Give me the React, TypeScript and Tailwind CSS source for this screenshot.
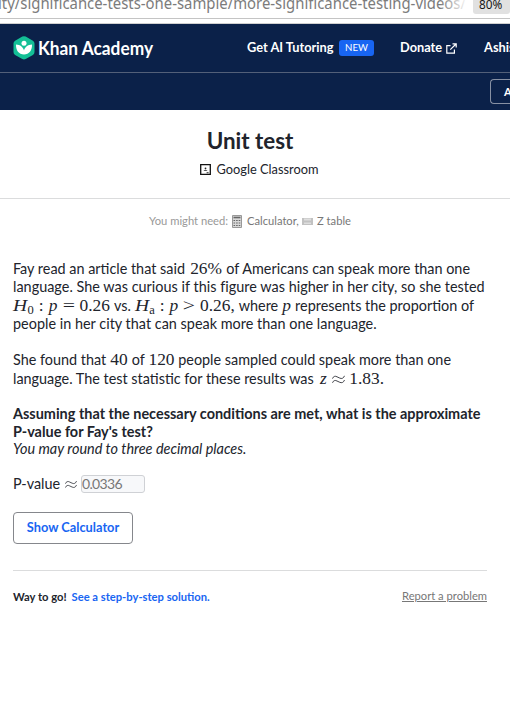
import type { ReactNode } from "react";

function M({ w, italic, children }: { w: string; italic?: boolean; children: ReactNode }) {
  return (
    <span
      className={`inline-block whitespace-nowrap text-center font-['Liberation_Serif',serif] text-[17.4px] leading-[16px] ${w} ${italic ? "italic" : ""}`}
    >
      {children}
    </span>
  );
}

function Approx() {
  return (
    <svg width="13" height="9" viewBox="0 0 13 9" fill="none" stroke="#21242c" strokeWidth="0.85" className="inline-block align-[0px]">
      <path d="M.5 3.6C1.2 1.3 3.3.7 5 1.8l2.8 1.3c1.8.9 3.8.3 4.7-2.3M.5 7.8C1.2 5.5 3.3 4.9 5 6l2.8 1.3c1.8.9 3.8.3 4.7-2.3" />
    </svg>
  );
}

function Hypothesis({ sub, op, value, w }: { sub: string; op: string; value: string; w: string }) {
  return (
    <M w={w}>
      <span className="flex items-baseline justify-between">
        <span>
          <i className="inline-block w-[14.5px] origin-left scale-x-112 text-left">H</i>
          <span className="inline-block align-[-3px] text-[12.5px] leading-[8px]">{sub}</span>
        </span>
        <span>:</span>
        <i>p</i>
        <span className="inline-block scale-x-125 px-px">{op}</span>
        <span>{value}</span>
      </span>
    </M>
  );
}

function Line({ h, w, children }: { h: string; w: string; children: ReactNode }) {
  return <div className={`flex items-baseline justify-between whitespace-pre ${h} ${w}`}>{children}</div>;
}

function Logo() {
  return (
    <svg width="22" height="24" viewBox="0 0 22 24" className="shrink-0">
      <path d="M9.3.6Q11-.3 12.7.6l7.2 4.1q1.6.9 1.6 2.8v8.6q0 1.9-1.6 2.8l-7.2 4.2q-1.7.9-3.4 0l-7.2-4.2Q.5 18 .5 16.100V7.500q0-1.900 1.600-2.800z" fill="#14bf96" />
      <circle cx="11" cy="7.300" r="2.500" fill="#fff" />
      <path d="M3 8.500c4.200.1 7.200 2.700 8 6 .8-3.300 3.800-5.900 8-6 .2 6-2.800 9.900-8 9.900S2.800 14.500 3 8.500z" fill="#fff" />
    </svg>
  );
}

export default function App() {
  return (
    <div className="h-[722px] w-[510px] overflow-hidden bg-white font-['Lato',sans-serif] text-[14.4px] text-[#21242c]">
      <div className="flex h-[24px] justify-between overflow-hidden border-b border-[#d0d0d0] bg-white">
        <div className="flex h-[19px] w-full justify-between border-b border-[#c4c4c4]">
          <div className="relative h-[18px] w-[468px] shrink-0 overflow-hidden whitespace-nowrap font-['Noto_Sans',sans-serif] text-[15.5px] text-[#7c7c7c]">
            <svg width="468" height="18" className="block">
              <text x="-2" y="9" textLength="468" lengthAdjust="spacingAndGlyphs" fill="currentColor">ity/significance-tests-one-sample/more-significance-testing-videos/</text>
            </svg>
            <div className="absolute inset-y-0 right-0 w-[28px] bg-linear-to-r from-transparent to-white" />
          </div>
          <div className="h-[14px] w-[37px] shrink-0 rounded-b-[3px] bg-[#e1e1e1] pl-[6px] font-['Noto_Sans',sans-serif] text-[11.8px] leading-[8px] text-[#171717]">80%</div>
        </div>
      </div>

      <header className="h-[86px] bg-[#0b2149] text-white">
        <div className="flex h-[49px] items-center border-b border-[#536079] pl-[13px]">
          <Logo />
          <svg width="118" height="28" className="ml-[3px] block shrink-0">
            <text x="0" y="21" textLength="115" lengthAdjust="spacingAndGlyphs" fill="white" className="font-['Lato',sans-serif] text-[18.5px] font-bold">Khan Academy</text>
          </svg>
          <div className="ml-[91px] w-[88px] shrink-0 whitespace-nowrap text-[12.8px] font-bold">Get AI Tutoring</div>
          <div className="ml-[4px] flex h-[16px] w-[35px] shrink-0 items-center justify-center rounded-[3px] bg-[#1865f2] text-[9.6px]">NEW</div>
          <div className="ml-[26px] w-[42px] shrink-0 text-[12.8px] font-bold">Donate</div>
          <svg width="11" height="11" viewBox="0 0 11 11" fill="none" stroke="white" strokeWidth="1.200" className="ml-[4px] mt-px shrink-0">
            <path d="M4.500 2.600H.8v7.600h7.600V6.500M6.500.8h3.700v3.700M10 1 4.300 6.700" />
          </svg>
          <div className="ml-[27px] shrink-0 whitespace-nowrap text-[12.8px] font-bold">Ashis</div>
        </div>
        <div className="flex justify-end overflow-hidden pt-[6px]">
          <div className="h-[25px] w-[20px] rounded-l-[4px] border border-r-0 border-[#8790a3] pl-[13px] text-[11px] leading-[23px] font-bold">A</div>
        </div>
      </header>

      <section className="flex h-[89px] flex-col items-center border-b border-[#dbdcdd] pr-[10px] pt-[17px]">
        <h1 className="text-[22.4px] leading-[28px] font-bold">Unit test</h1>
        <div className="ml-[18px] mt-[6px] flex h-[18px] items-center text-[12.8px]">
          <svg width="11" height="11" viewBox="0 0 11 11" fill="none" className="mb-px mr-[6px]">
            <path d="M.7.700h9.600v9.600H.7z" stroke="#111" strokeWidth="1.300" />
            <circle cx="5.500" cy="4.300" r=".9" fill="#222" />
            <path d="M3.400 6.700q2.100-2 4.200 0zM6.600 8.300h2v1h-2z" fill="#222" />
          </svg>
          Google Classroom
        </div>
      </section>

      <div className="flex h-[61px] items-start whitespace-nowrap pl-[149px] pt-[14px] text-[11.2px] leading-[16px] text-[#777]">
        <span className="w-[79px] text-[#999]">You might need:</span>
        <svg width="10" height="13" viewBox="0 0 10 13" className="ml-[4px] mt-[2px]">
          <path d="M.5.5h9v12h-9z" fill="#d8d8d8" stroke="#999" />
          <path d="M1.500 2.500h7" stroke="#666" strokeWidth="1.600" />
          <path d="M1.500 5.500h7M1.500 8h7M1.500 10.500h7" stroke="#666" strokeWidth="1.200" strokeDasharray="1.600 1" />
        </svg>
        <span className="ml-[5px] w-[52px]">Calculator,</span>
        <svg width="11" height="7" viewBox="0 0 11 7" className="ml-[3px] mt-[5px]">
          <path d="M0 0h11v7H0z" fill="#c2c2c2" />
          <path d="M2 .5h7v2H2zM2 4.500h7v1.500H2z" fill="#dedede" />
        </svg>
        <span className="ml-[4px]">Z table</span>
      </div>

      <main className="px-[13px] leading-[18px]">
        <Line h="h-[18px]" w="w-[457px]">
          <span>Fay read an article that said</span><M w="w-[31px]">26%</M><span>of Americans can speak more than one</span>
        </Line>
        <div className="h-[19px] whitespace-nowrap tracking-[0.022px] [font-variant-ligatures:common-ligatures]">language. She was curious if this figure was higher in her city, so she tested</div>
        <Line h="h-[18px]" w="w-[461px]">
          <Hypothesis sub="0" op="=" value="0.26" w="w-[97px]" />
          <span>vs.</span>
          <Hypothesis sub="a" op="&gt;" value="0.26," w="w-[100px]" />
          <span>where</span><M w="w-[9px]" italic>p</M><span>represents the proportion of</span>
        </Line>
        <Line h="h-[36px]" w="w-[365px]"><span className="tracking-[0.02px] [font-variant-ligatures:common-ligatures]">people in her city that can speak more than one language.</span></Line>
        <Line h="h-[19px]" w="w-[438px]">
          <span>She found that</span><M w="w-[18px]">40</M><span>of</span><M w="w-[26px]">120</M><span>people sampled could speak more than one</span>
        </Line>
        <Line h="h-[35px]" w="w-[371px]">
          <span>language. The test statistic for these results was</span>
          <M w="w-[64px]"><span className="flex items-baseline justify-between"><i>z</i><Approx /><span>1.83.</span></span></M>
        </Line>
        <div className="h-[18px] whitespace-nowrap text-[14.44px] font-bold">Assuming that the necessary conditions are met, what is the approximate</div>
        <div className="h-[17px] text-[14.44px] font-bold">P-value for Fay's test?</div>
        <div className="h-[35px] text-[14.44px] italic">You may round to three decimal places.</div>
        <div className="flex h-[18px] items-center">
          <span className="w-[52px] whitespace-nowrap">P-value</span>
          <span className="flex w-[12px] items-center"><Approx /></span>
          <div className="ml-[4px] h-[18px] w-[64px] rounded-[3px] border border-[#cfd1d5] bg-[#f7f8fa] text-[14px] leading-[16px] tracking-[-0.65px] text-[#777]">0.0336</div>
        </div>
        <button className="mt-[19px] flex h-[32px] w-[120px] items-center justify-center rounded-[4px] border border-[#85878c] pb-[2px] text-[12.8px] font-bold text-[#1865f2]">Show Calculator</button>
        <footer className="mt-[26px] flex w-[474px] justify-between border-t border-[#dbdcdd] pt-[17px] text-[11.2px]">
          <div className="whitespace-nowrap font-bold">Way to go!<span className="ml-[5px] text-[#1865f2]">See a step-by-step solution.</span></div>
          <div className="-mt-px text-[#777] underline">Report a problem</div>
        </footer>
      </main>
    </div>
  );
}
